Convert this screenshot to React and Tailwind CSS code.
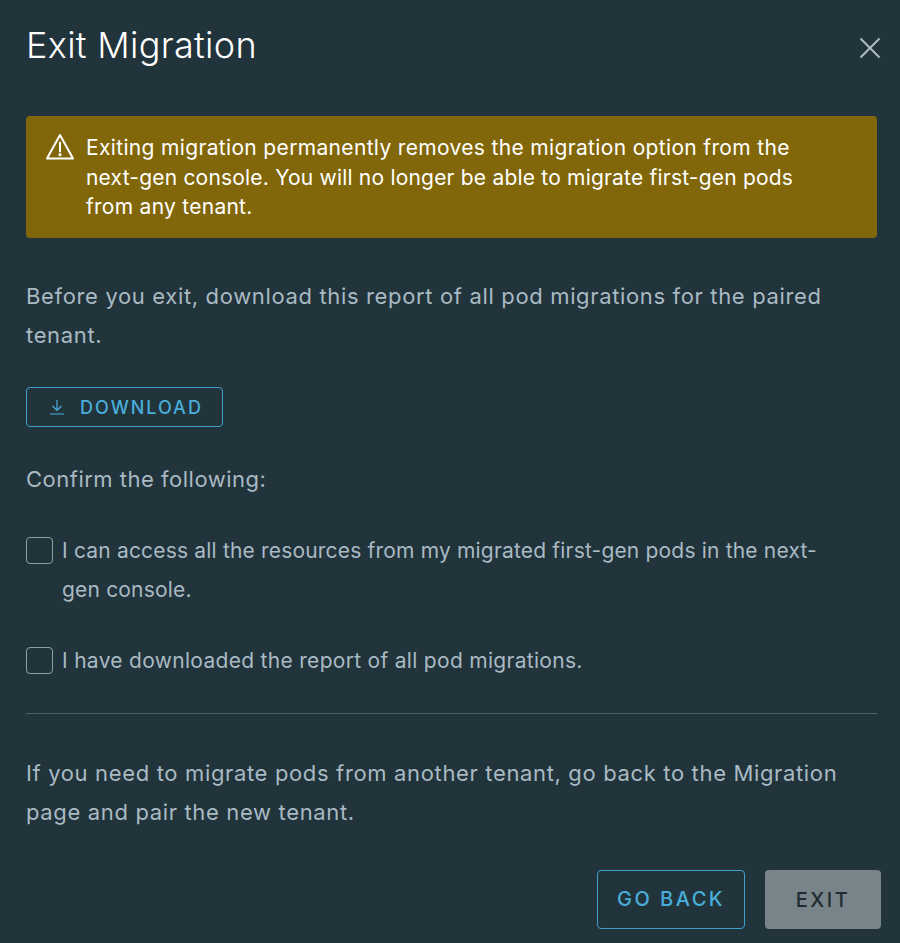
import { useState } from "react";

const font = "font-['Inter','Liberation_Sans',sans-serif]";

function App() {
  const [first, setFirst] = useState(false);
  const [second, setSecond] = useState(false);

  return (
    <div className={`${font} h-[943px] w-[900px] overflow-hidden bg-[#21333b] pl-[26px] pr-[23px] text-[22px] leading-[39px] tracking-[0.65px] text-[#a9bac3]`}>
      {/* Header */}
      <div className="flex h-[116px] items-start justify-between">
        <h1 className="mt-[22px] text-[36px] leading-[46px] font-light tracking-[0.3px] text-white">Exit Migration</h1>
        <button className="mt-[37px] mr-[-4px] text-[#adbbc4]">
          <svg width="22" height="22" viewBox="0 0 22 22" fill="none" stroke="currentColor" strokeWidth="2">
            <path d="M1.5 1.5 20.5 20.5M20.5 1.5 1.5 20.5" />
          </svg>
        </button>
      </div>

      {/* Warning */}
      <div className="flex h-[122px] gap-[11px] rounded bg-[#816709] pt-[17px] pl-[19px] text-[21px] leading-[29.5px] tracking-[0.27px] text-white">
        <svg className="mt-[-1px] shrink-0" width="30" height="30" viewBox="0 0 30 30" fill="none" stroke="currentColor" strokeWidth="2" strokeLinejoin="round">
          <path d="M15 3 28 26.5H2Z" />
          <path d="M15 10.5v9" strokeLinecap="round" />
          <circle cx="15" cy="22.7" r="0.6" fill="currentColor" />
        </svg>
        <p>
          <span className="tracking-[0.34px]">Exiting migration permanently removes the migration option from the</span>
          <br />
          <span className="tracking-[0.2px]">next-gen console. You will no longer be able to migrate first-gen pods</span>
          <br />
          from any tenant.
        </p>
      </div>

      <p className="mt-[39px]">
        Before you exit, download this report of all pod migrations for the paired
        <br />
        tenant.
      </p>

      <button className="mt-[32px] flex h-[40px] w-[197px] items-center gap-[15px] rounded border border-[#3e9fca] pl-[22px] text-[18px] font-medium tracking-[2px] text-[#49aed9]">
        <svg width="16" height="16" viewBox="0 0 16 16" fill="none" stroke="currentColor" strokeWidth="1.2">
          <path d="M8 1v10M3.5 7 8 11.5 12.5 7M1 15h14" />
        </svg>
        DOWNLOAD
      </button>

      <p className="mt-[33px] tracking-[0.5px]">Confirm the following:</p>

      <label className="mt-[32px] flex items-start gap-[9px] text-[21px] tracking-[0.18px]">
        <input
          type="checkbox"
          checked={first}
          onChange={() => setFirst(!first)}
          className="mt-[6px] h-[27px] w-[27px] shrink-0 appearance-none rounded border border-[#8d9fa8]"
        />
        <span>
          I can access all the resources from my migrated first-gen pods in the next-
          <br />
          gen console.
        </span>
      </label>

      <label className="mt-[32px] flex items-start gap-[9px] text-[21px] tracking-[0.3px]">
        <input
          type="checkbox"
          checked={second}
          onChange={() => setSecond(!second)}
          className="mt-[6px] h-[27px] w-[27px] shrink-0 appearance-none rounded border border-[#8d9fa8]"
        />
        <span>I have downloaded the report of all pod migrations.</span>
      </label>

      <hr className="mt-[33px] border-[#4d5f67]" />

      <p className="mt-[40px]">
        If you need to migrate pods from another tenant, go back to the Migration
        <br />
        page and pair the new tenant.
      </p>

      {/* Footer */}
      <div className="mt-[38px] flex justify-end gap-[20px]">
        <button className="h-[59px] w-[148px] rounded border border-[#3e9fca] text-[20px] font-medium tracking-[2.5px] text-[#49aed9]">
          GO BACK
        </button>
        <button className="mr-[-4px] h-[59px] w-[116px] rounded bg-[#78848a] pt-[1px] text-[20px] font-medium tracking-[2.5px] text-[#1f2b32]">
          EXIT
        </button>
      </div>
    </div>
  );
}

export default App;
